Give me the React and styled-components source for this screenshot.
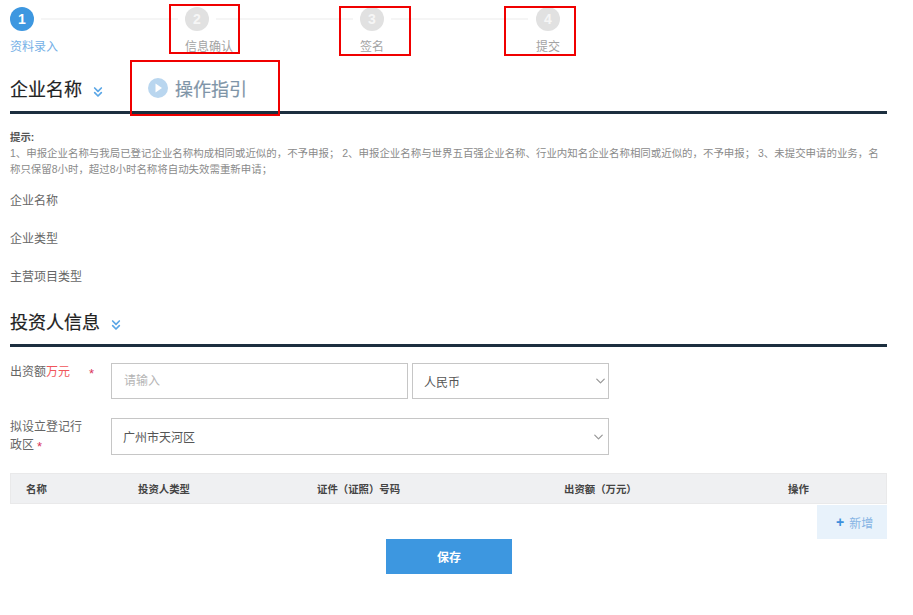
import styled, { createGlobalStyle } from "styled-components";
import { ChevronDown, ChevronsDown } from "lucide-react";

const GlobalStyle = createGlobalStyle`
  * {
    box-sizing: border-box;
  }
  body {
    margin: 0;
    background: #fff;
    font-family: "Liberation Sans", "Noto Sans CJK SC", sans-serif;
  }
`;

const Page = styled.div`
  position: relative;
  width: 913px;
  height: 615px;
  padding: 7px 26px 0 10px;
  overflow: hidden;
`;
const Steps = styled.div`
  display: flex;
`;
const Step = styled.div`
  width: ${(props) => props.$width}px;
  flex-shrink: 0;
`;
const StepTop = styled.div`
  display: flex;
  align-items: center;
  gap: 7px;
`;
const Circle = styled.div`
  width: 24px;
  height: 24px;
  flex-shrink: 0;
  border-radius: 50%;
  background: ${(props) => (props.$active ? "#3d97e0" : "#e1e1e1")};
  color: ${(props) => (props.$active ? "#fff" : "#f6f6f6")};
  font-size: 14px;
  font-weight: bold;
  line-height: 24px;
  text-align: center;
`;
const StepLine = styled.div`
  width: 137px;
  height: 2px;
  background: #f5f5f5;
`;
const StepLabel = styled.div`
  margin-top: 8px;
  font-size: 12px;
  line-height: 16px;
  color: ${(props) => (props.$active ? "#74b0e6" : "#a3a3a3")};
`;
const Heading = styled.div`
  display: flex;
  align-items: center;
  height: 30px;
  margin-top: ${(props) => props.$top}px;
`;
const HeadingText = styled.h2`
  margin: 0;
  font-size: 18px;
  font-weight: 400;
  line-height: 30px;
  color: #222;
  -webkit-text-stroke: 0.2px #222;
`;
const Arrows = styled(ChevronsDown)`
  margin: 3px 0 0 8px;
  color: #5aa6e6;
`;
const Guide = styled.div`
  display: flex;
  align-items: center;
  gap: 7px;
  margin: 0 0 4px 42px;
  font-size: 18px;
  font-weight: 400;
  color: #7f95a8;
  -webkit-text-stroke: 0.2px #7f95a8;
`;
const Rule = styled.div`
  height: 3px;
  margin-top: 6px;
  background: #1d2f3f;
`;
const Hint = styled.div`
  margin-top: 16px;
  font-size: 10.45px;
  line-height: 16px;
  color: #8a8a8a;
`;
const HintTitle = styled.div`
  font-weight: bold;
  color: #555;
`;
const InfoList = styled.div`
  display: flex;
  flex-direction: column;
  gap: 20px;
  margin-top: 14px;
`;
const InfoRow = styled.div`
  font-size: 12px;
  line-height: 18px;
  color: #666;
`;
const FormRow = styled.div`
  display: flex;
  margin-top: ${(props) => props.$top}px;
`;
const FieldLabel = styled.div`
  width: 80px;
  margin-right: 21px;
  flex-shrink: 0;
  font-size: 12px;
  line-height: 18px;
  color: #666;
  white-space: ${(props) => (props.$nowrap ? "nowrap" : "normal")};
`;
const Money = styled.span`
  color: #f0555a;
`;
const Star = styled.span`
  margin-left: ${(props) => props.$left}px;
  font-size: 13px;
  vertical-align: -2px;
  color: #d9345c;
`;
const Input = styled.input`
  width: 297px;
  height: 36px;
  padding: 0 12px;
  border: 1px solid #c6c6c6;
  border-radius: 0;
  outline: none;
  font: inherit;
  font-size: 12px;
  &::placeholder {
    color: #b5b5b5;
  }
`;
const SelectBox = styled.div`
  position: relative;
  width: ${(props) => props.$width}px;
  height: ${(props) => props.$height}px;
  margin-left: ${(props) => props.$left || 0}px;
  display: flex;
  align-items: center;
  padding: 0 11px;
  border: 1px solid #c6c6c6;
  font-size: 12px;
  color: #555;
`;
const SelectArrow = styled(ChevronDown)`
  position: absolute;
  right: ${(props) => props.$right}px;
  top: 50%;
  transform: translateY(-50%);
  color: #999;
`;
const TableHead = styled.div`
  display: grid;
  grid-template-columns: 112px 179px 247px 224px 1fr;
  align-items: center;
  height: 31px;
  margin-top: 17px;
  padding-left: 15px;
  background: #eff0f2;
  border: 1px solid #e9e9ea;
  font-size: 10.4px;
  font-weight: bold;
  color: #444;
`;
const AddRow = styled.div`
  display: flex;
  justify-content: flex-end;
  margin-top: 1px;
`;
const AddButton = styled.button`
  width: 70px;
  height: 34px;
  display: flex;
  align-items: center;
  gap: 5px;
  padding: 0 0 0 19px;
  border: 0;
  background: #e8f2fb;
  font: inherit;
  font-size: 12px;
  color: #86b4e4;
`;
const Plus = styled.span`
  font-size: 14px;
  font-weight: bold;
  color: #3d8fdc;
`;
const SaveRow = styled.div`
  display: flex;
  justify-content: center;
  padding-left: 1px;
`;
const SaveButton = styled.button`
  width: 126px;
  height: 35px;
  border: 0;
  background: #3d97e0;
  font: inherit;
  font-size: 12px;
  font-weight: bold;
  color: #fff;
`;
// red boxes drawn on top of the screenshot
const Marker = styled.div`
  position: absolute;
  left: ${(props) => props.$x}px;
  top: ${(props) => props.$y}px;
  width: ${(props) => props.$w}px;
  height: ${(props) => props.$h}px;
  border: 2px solid #f00000;
`;

const steps = [
  { num: 1, label: "资料录入", width: 175, active: true },
  { num: 2, label: "信息确认", width: 175 },
  { num: 3, label: "签名", width: 176 },
  { num: 4, label: "提交", width: 60, last: true },
];
const markers = [
  { x: 169, y: 4, w: 71, h: 50 },
  { x: 339, y: 6, w: 72, h: 50 },
  { x: 504, y: 6, w: 72, h: 50 },
  { x: 130, y: 60, w: 150, h: 56 },
];
const columns = ["名称", "投资人类型", "证件（证照）号码", "出资额（万元）", "操作"];

const App = () => {
  return (
    <Page>
      <GlobalStyle />
      <Steps>
        {steps.map((step) => (
          <Step key={step.num} $width={step.width}>
            <StepTop>
              <Circle $active={step.active}>{step.num}</Circle>
              {!step.last && <StepLine />}
            </StepTop>
            <StepLabel $active={step.active}>{step.label}</StepLabel>
          </Step>
        ))}
      </Steps>
      <Heading $top={20}>
        <HeadingText>企业名称</HeadingText>
        <Arrows size={16} strokeWidth={2.5} />
        <Guide>
          <svg width="20" height="20" viewBox="0 0 20 20">
            <circle cx="10" cy="10" r="10" fill="#b9d6ef" />
            <path d="M7.5 5.5 L14 10 L7.5 14.5 Z" fill="#fff" />
          </svg>
          操作指引
        </Guide>
      </Heading>
      <Rule />
      <Hint>
        <HintTitle>提示:</HintTitle>
        1、申报企业名称与我局已登记企业名称构成相同或近似的，不予申报； 2、申报企业名称与世界五百强企业名称、行业内知名企业名称相同或近似的，不予申报； 3、未提交申请的业务，名称只保留8小时，超过8小时名称将自动失效需重新申请；
      </Hint>
      <InfoList>
        <InfoRow>企业名称</InfoRow>
        <InfoRow>企业类型</InfoRow>
        <InfoRow>主营项目类型</InfoRow>
      </InfoList>
      <Heading $top={22}>
        <HeadingText>投资人信息</HeadingText>
        <Arrows size={16} strokeWidth={2.5} />
      </Heading>
      <Rule />
      <FormRow $top={16}>
        <FieldLabel $nowrap>
          出资额<Money>万元</Money>
          <Star $left={19}>*</Star>
        </FieldLabel>
        <Input placeholder="请输入" />
        <SelectBox $width={197} $height={36} $left={4}>
          人民币
          <SelectArrow size={15} $right={0} />
        </SelectBox>
      </FormRow>
      <FormRow $top={19}>
        <FieldLabel>
          拟设立登记行政区<Star $left={3}>*</Star>
        </FieldLabel>
        <SelectBox $width={498} $height={37}>
          广州市天河区
          <SelectArrow size={15} $right={2} />
        </SelectBox>
      </FormRow>
      <TableHead>
        {columns.map((name) => (
          <span key={name}>{name}</span>
        ))}
      </TableHead>
      <AddRow>
        <AddButton>
          <Plus>+</Plus>新增
        </AddButton>
      </AddRow>
      <SaveRow>
        <SaveButton>保存</SaveButton>
      </SaveRow>
      {markers.map((box) => (
        <Marker key={box.x} $x={box.x} $y={box.y} $w={box.w} $h={box.h} />
      ))}
    </Page>
  );
};

export default App;
